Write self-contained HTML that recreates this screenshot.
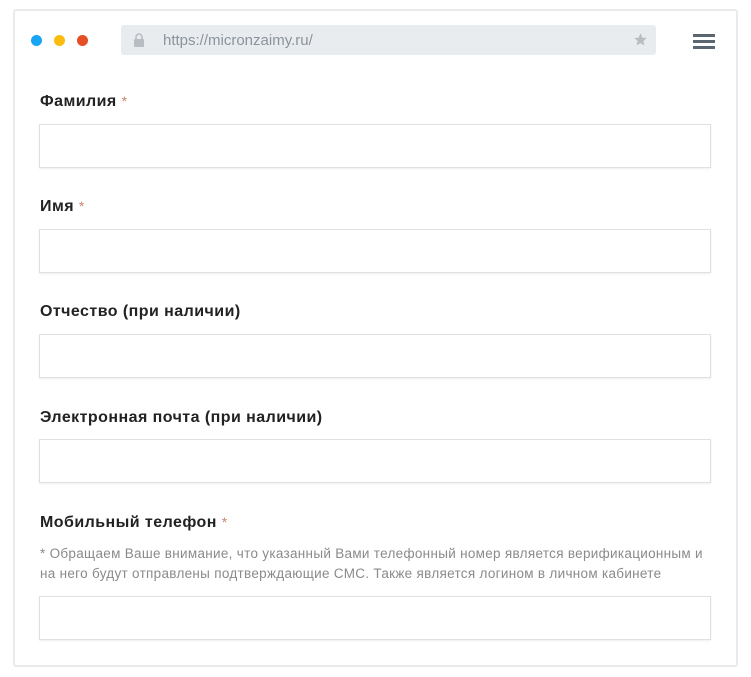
<!DOCTYPE html>
<html><head><meta charset="utf-8"><style>
body{margin:0;width:751px;height:677px;background:#fff;font-family:"Liberation Sans",sans-serif;position:relative;overflow:hidden}
.frame{position:absolute;left:13px;top:9px;width:721px;height:654px;border:2px solid #e8eaec;border-radius:3px}
.dot{position:absolute;top:35px;width:11px;height:11px;border-radius:50%}
.bar{position:absolute;left:121px;top:25px;width:535px;height:30px;background:#e9ecef;border-radius:3px}
.url{position:absolute;left:42px;top:7px;font-size:15px;color:#8a939c}
.hb{position:absolute;left:693px;width:22px;height:3px;background:#5b6670}
.lbl{position:absolute;left:40px;font-size:16px;font-weight:bold;color:#222;letter-spacing:0.45px}
.lbl span{color:#c9866b;font-weight:normal;font-size:14px;vertical-align:top}
.in{position:absolute;left:39px;width:670px;height:42px;border:1px solid #e0e0e0;box-shadow:0 1px 2px #eee}
.note{position:absolute;left:40px;top:544px;font-size:13.5px;line-height:20px;color:#8a8a8a;width:690px;letter-spacing:0.3px;white-space:nowrap}
</style></head><body>
<div class="frame"></div>
<div class="dot" style="left:31px;background:#18a5f5"></div>
<div class="dot" style="left:54px;background:#fbbc10"></div>
<div class="dot" style="left:77px;background:#e54f26"></div>
<div class="bar">
<svg style="position:absolute;left:12px;top:8px" width="12" height="14" viewBox="0 0 12 14"><path d="M3 6V4a3 3 0 0 1 6 0v2" stroke="#b7bdc3" stroke-width="1.6" fill="none"/><rect x="1" y="6" width="10" height="8" rx="1" fill="#b7bdc3"/></svg>
<div class="url">https://micronzaimy.ru/</div>
<svg style="position:absolute;left:512px;top:7px" width="15" height="15" viewBox="0 0 24 24"><path d="M12 2l3 7 7 .6-5.4 4.7 1.7 7.2L12 17.8 5.7 21.5l1.7-7.2L2 9.6 9 9z" fill="#b7bdc3"/></svg>
</div>
<div class="hb" style="top:34px"></div><div class="hb" style="top:40px"></div><div class="hb" style="top:46px"></div>
<div class="lbl" style="top:93px">Фамилия <span>*</span></div>
<div class="in" style="top:124px"></div>
<div class="lbl" style="top:198px">Имя <span>*</span></div>
<div class="in" style="top:229px"></div>
<div class="lbl" style="top:303px">Отчество (при наличии)</div>
<div class="in" style="top:334px"></div>
<div class="lbl" style="top:409px">Электронная почта (при наличии)</div>
<div class="in" style="top:439px"></div>
<div class="lbl" style="top:514px">Мобильный телефон <span>*</span></div>
<div class="note">* Обращаем Ваше внимание, что указанный Вами телефонный номер является верификационным и<br>на него будут отправлены подтверждающие СМС. Также является логином в личном кабинете</div>
<div class="in" style="top:596px"></div>
</body></html>
